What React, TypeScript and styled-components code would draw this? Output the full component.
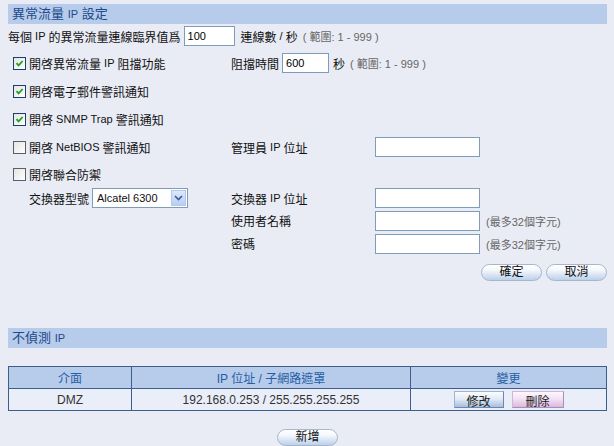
import React from "react"
import styled, { createGlobalStyle } from "styled-components"

const GlobalStyle = createGlobalStyle`
  html, body {
    margin: 0;
    padding: 0;
    background: #e9ecf5;
  }
  body {
    font-family: "Liberation Sans", "Noto Sans CJK TC", sans-serif;
    font-size: 12px;
    color: #111;
  }
`

const Page = styled.div`
  width: 614px;
  height: 446px;
  box-sizing: border-box;
  padding: 4px 7px 0 8px;
  background: #e9ecf5;
`

const SectionBar = styled.div<{ $mt?: number }>`
  height: 20px;
  margin-top: ${p => p.$mt || 0}px;
  background: #b7cbea;
  color: #1d4a8c;
  font-size: 13px;
  line-height: 20px;
  padding-left: 4px;
`

const Line = styled.div`
  display: flex;
  align-items: center;
  height: 22px;
  margin-top: 1px;
  white-space: nowrap;
`

const Small = styled.span`
  font-size: 11px;
`

const Hint = styled.span`
  color: #666;
  font-size: 11px;
  margin-left: ${p => (p as any).$ml || 0}px;
`

const TextInput = styled.input<{ $w: number }>`
  box-sizing: border-box;
  width: ${p => p.$w}px;
  height: 20px;
  border: 1px solid #7f9db9;
  background: #fff;
  font-family: "Liberation Sans", sans-serif;
  font-size: 11px;
  padding: 0 3px;
  margin: 0 6px 0 3px;
  outline: none;
`

const FormGrid = styled.div`
  display: grid;
  grid-template-columns: 223px 144px 1fr;
  grid-template-rows: 28px 28px 28px 28px 26px 22px 23px 23px;
  margin-top: 2px;
`

const Cell = styled.div<{ $col?: string; $indent?: number }>`
  display: flex;
  align-items: center;
  white-space: nowrap;
  grid-column: ${p => p.$col || "auto"};
  padding-left: ${p => p.$indent || 0}px;
`

const Box = styled.span<{ $checked?: boolean }>`
  box-sizing: border-box;
  width: 13px;
  height: 13px;
  margin-right: 3px;
  border: 1px solid ${p => (p.$checked ? "#1d3f6e" : "#56606c")};
  background: linear-gradient(135deg, #e4e4e0, #ffffff);
  display: inline-flex;
  align-items: center;
  justify-content: center;
`

const Check = ({ checked }: { checked?: boolean }) => (
  <Box $checked={checked}>
    {checked && (
      <svg width="9" height="9" viewBox="0 0 9 9">
        <path d="M1.5 4.2 L3.6 6.4 L7.6 2" fill="none" stroke="#21a121" strokeWidth="1.8" />
      </svg>
    )}
  </Box>
)

const SelectBox = styled.div`
  box-sizing: border-box;
  width: 96px;
  height: 20px;
  margin-left: 3px;
  border: 1px solid #7f9db9;
  background: #fff;
  display: flex;
  align-items: center;
  justify-content: space-between;
  font-size: 11px;
  padding-left: 4px;
`

const SelectArrow = styled.span`
  width: 15px;
  height: 16px;
  margin-right: 1px;
  background: linear-gradient(#dde8fb, #b8cdf2);
  border: 1px solid #b4c8ee;
  box-sizing: border-box;
  display: flex;
  align-items: center;
  justify-content: center;
`

const Actions = styled.div`
  display: flex;
  justify-content: flex-end;
  gap: 4px;
  margin-top: 9px;
`

const PillButton = styled.button`
  width: 61px;
  height: 17px;
  border-radius: 9px;
  border: 1px solid #a7b6cc;
  background: linear-gradient(#ffffff 0%, #f4f7fc 35%, #bcd0ec 100%);
  font-family: "Liberation Sans", "Noto Sans CJK TC", sans-serif;
  font-size: 12px;
  color: #111;
  padding: 0;
  line-height: 15px;
`

const Table = styled.table`
  width: 100%;
  margin-top: 18px;
  border-collapse: collapse;
  font-size: 12px;
`

const Th = styled.th<{ $w?: number }>`
  height: 21px;
  padding: 0;
  border: 1px solid #3d5d8c;
  background: #b7cbea;
  color: #2560a6;
  font-weight: normal;
  width: ${p => (p.$w ? `${p.$w}px` : "auto")};
`

const Td = styled.td`
  height: 21px;
  padding: 0;
  border: 1px solid #3d5d8c;
  background: #eaeef8;
  color: #333;
  text-align: center;
`

const RowButton = styled.button<{ $tone: "blue" | "pink" }>`
  height: 17px;
  width: ${p => (p.$tone === "blue" ? 50 : 52)}px;
  margin: 0 4px;
  border: 1px solid ${p => (p.$tone === "blue" ? "#9fb3cf" : "#d2b6d8")};
  border-right-color: ${p => (p.$tone === "blue" ? "#6f87aa" : "#a98fb0")};
  border-bottom-color: ${p => (p.$tone === "blue" ? "#6f87aa" : "#a98fb0")};
  background: ${p =>
    p.$tone === "blue"
      ? "linear-gradient(#fbfcfe, #e3ebf6 45%, #a7bfdf)"
      : "linear-gradient(#fdf6fd, #f3e2f4 45%, #dbb8df)"};
  font-family: "Liberation Sans", "Noto Sans CJK TC", sans-serif;
  font-size: 12px;
  color: #222;
  padding: 0;
  vertical-align: middle;
`

const Footer = styled.div`
  display: flex;
  justify-content: center;
  margin-top: 18px;
`

export default function App() {
  return (
    <Page>
      <GlobalStyle />
      <SectionBar>
        異常流量 <Small>IP</Small> 設定
      </SectionBar>
      <Line>
        每個 <Small>&nbsp;IP&nbsp;</Small>的異常流量連線臨界值爲
        <TextInput $w={51} defaultValue="100" />
        連線數 <Small>&nbsp;/&nbsp;</Small>秒
        <Hint style={{ marginLeft: 5 }}>( 範圍: 1 - 999 )</Hint>
      </Line>
      <FormGrid>
        <Cell $indent={5}>
          <Check checked />
          開啓異常流量 <Small>&nbsp;IP&nbsp;</Small>阻擋功能
        </Cell>
        <Cell $col="2 / 4">
          阻擋時間
          <TextInput $w={47} defaultValue="600" style={{ marginRight: 4 }} />
          秒
          <Hint style={{ marginLeft: 5 }}>( 範圍: 1 - 999 )</Hint>
        </Cell>

        <Cell $col="1 / 4" $indent={5}>
          <Check checked />
          開啓電子郵件警訊通知
        </Cell>

        <Cell $col="1 / 4" $indent={5}>
          <Check checked />
          開啓 <Small>&nbsp;SNMP Trap&nbsp;</Small>警訊通知
        </Cell>

        <Cell $indent={5}>
          <Check />
          開啓 <Small>&nbsp;NetBIOS&nbsp;</Small>警訊通知
        </Cell>
        <Cell>
          管理員 <Small>&nbsp;IP&nbsp;</Small>位址
        </Cell>
        <Cell>
          <TextInput $w={105} style={{ marginLeft: 0 }} />
        </Cell>

        <Cell $col="1 / 4" $indent={5}>
          <Check />
          開啓聯合防禦
        </Cell>

        <Cell $indent={21}>
          交換器型號
          <SelectBox>
            Alcatel 6300
            <SelectArrow>
              <svg width="9" height="6" viewBox="0 0 9 6">
                <path d="M1 1 L4.5 4.5 L8 1" fill="none" stroke="#3d5a96" strokeWidth="1.6" />
              </svg>
            </SelectArrow>
          </SelectBox>
        </Cell>
        <Cell>
          交換器 <Small>&nbsp;IP&nbsp;</Small>位址
        </Cell>
        <Cell>
          <TextInput $w={105} style={{ marginLeft: 0 }} />
        </Cell>

        <Cell $col="2">使用者名稱</Cell>
        <Cell>
          <TextInput $w={105} style={{ marginLeft: 0 }} />
          <Hint>(最多32個字元)</Hint>
        </Cell>

        <Cell $col="2">密碼</Cell>
        <Cell>
          <TextInput $w={105} style={{ marginLeft: 0 }} />
          <Hint>(最多32個字元)</Hint>
        </Cell>
      </FormGrid>
      <Actions>
        <PillButton>確定</PillButton>
        <PillButton>取消</PillButton>
      </Actions>

      <SectionBar $mt={47}>
        不偵測 <Small>IP</Small>
      </SectionBar>
      <Table>
        <thead>
          <tr>
            <Th $w={122}>介面</Th>
            <Th $w={278}>
              IP 位址 / 子網路遮罩
            </Th>
            <Th>變更</Th>
          </tr>
        </thead>
        <tbody>
          <tr>
            <Td>DMZ</Td>
            <Td>192.168.0.253 / 255.255.255.255</Td>
            <Td>
              <RowButton $tone="blue">修改</RowButton>
              <RowButton $tone="pink">刪除</RowButton>
            </Td>
          </tr>
        </tbody>
      </Table>
      <Footer>
        <PillButton>新增</PillButton>
      </Footer>
    </Page>
  )
}
